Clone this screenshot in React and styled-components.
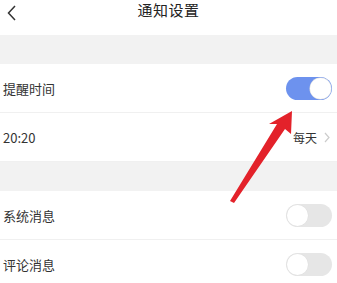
import styled, { createGlobalStyle } from "styled-components";

const GlobalStyle = createGlobalStyle`
  body {
    margin: 0;
    background: #ffffff;
    font-family: "Noto Sans CJK SC", "Noto Sans", sans-serif;
    color: #333333;
  }
`;

const Page = styled.div`
  position: relative;
  width: 337px;
  height: 283px;
  overflow: hidden;
  background: #ffffff;
`;

const Header = styled.div`
  height: 35px;
  display: flex;
  align-items: flex-start;
  justify-content: center;
  position: relative;
`;

const Back = styled.div`
  position: absolute;
  left: 6px;
  top: 2px;
  width: 12px;
  height: 16px;
`;

const Title = styled.div`
  font-size: 15px;
  line-height: 18px;
  color: #222;
  padding-top: 1px;
  letter-spacing: 0.5px;
`;

const Gap = styled.div`
  height: ${(p) => p.h}px;
  background: #f2f2f2;
`;

const Row = styled.div`
  height: 48px;
  display: flex;
  align-items: center;
  justify-content: space-between;
  padding: 0 5px 0 3px;
  border-bottom: ${(p) => (p.last ? "none" : "1px solid #f0f0f0")};
`;

const Label = styled.span`
  font-size: 13px;
  color: #333;
`;

const Right = styled.div`
  display: flex;
  align-items: center;
  gap: 7px;
  font-size: 12px;
  color: #333;
  padding-right: 2px;
`;

const Toggle = styled.div`
  width: 46px;
  height: 23px;
  border-radius: 12px;
  background: ${(p) => (p.on ? "#6d92ee" : "#e6e6e6")};
  display: flex;
  align-items: center;
  justify-content: ${(p) => (p.on ? "flex-end" : "flex-start")};
  padding: 1px;
  box-sizing: border-box;
`;

const Knob = styled.div`
  width: 21px;
  height: 21px;
  border-radius: 50%;
  background: #fff;
  box-shadow: 0 0 0 0.5px #e0e0e0;
`;

const Arrow = styled.svg`
  position: absolute;
  left: 0;
  top: 0;
  pointer-events: none;
`;

export default function App() {
  return (
    <Page>
      <GlobalStyle />
      <Header>
        <Back>
          <svg width="12" height="16" viewBox="0 0 12 16">
            <path d="M9 1 L2.5 8 L9 15" fill="none" stroke="#333" strokeWidth="1.5" />
          </svg>
        </Back>
        <Title>通知设置</Title>
      </Header>
      <Gap h={29} />
      <Row>
        <Label>提醒时间</Label>
        <Toggle on>
          <Knob />
        </Toggle>
      </Row>
      <Row>
        <Label>20:20</Label>
        <Right>
          <span>每天</span>
          <svg width="6" height="11" viewBox="0 0 6 11">
            <path d="M1 1 L5 5.5 L1 10" fill="none" stroke="#cccccc" strokeWidth="1.2" />
          </svg>
        </Right>
      </Row>
      <Gap h={29} />
      <Row>
        <Label>系统消息</Label>
        <Toggle>
          <Knob />
        </Toggle>
      </Row>
      <Row last>
        <Label>评论消息</Label>
        <Toggle>
          <Knob />
        </Toggle>
      </Row>
      <Arrow width="337" height="283" viewBox="0 0 337 283">
        <polygon
          points="292,111 291,134 285,129 234,203 230,201 277,124 269,124"
          fill="#e3222a"
        />
      </Arrow>
    </Page>
  );
}
